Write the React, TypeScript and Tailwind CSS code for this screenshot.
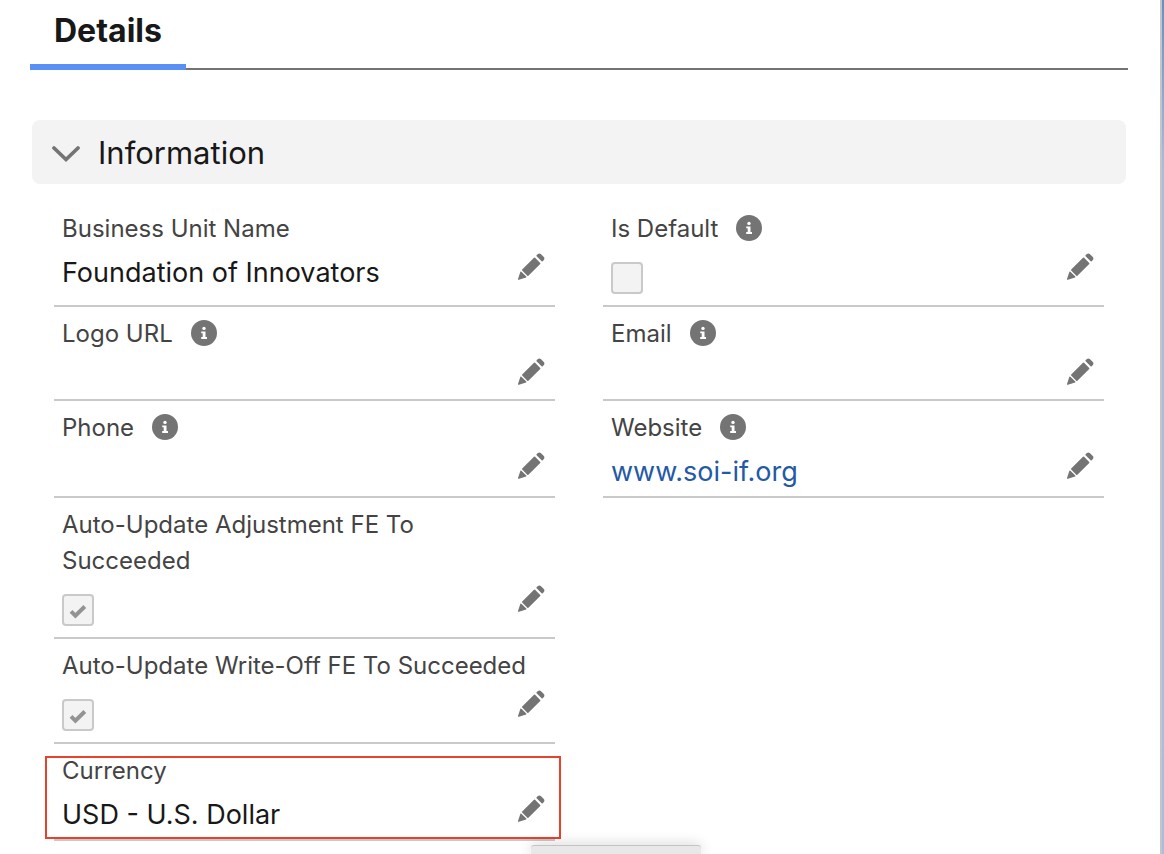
import React from 'react';

interface Field {
  id: string;
  label: string;
  info?: boolean;
  type?: 'text' | 'checkbox' | 'link';
  value?: string;
  checked?: boolean;
  highlighted?: boolean;
}

const rows: Field[][] = [
  [
    { id: 'name', label: 'Business Unit Name', value: 'Foundation of Innovators' },
    { id: 'default', label: 'Is Default', info: true, type: 'checkbox' },
  ],
  [
    { id: 'logo', label: 'Logo URL', info: true },
    { id: 'email', label: 'Email', info: true },
  ],
  [
    { id: 'phone', label: 'Phone', info: true },
    { id: 'website', label: 'Website', info: true, type: 'link', value: 'www.soi-if.org' },
  ],
  [{ id: 'adjustment', label: 'Auto-Update Adjustment FE To Succeeded', type: 'checkbox', checked: true }],
  [{ id: 'writeoff', label: 'Auto-Update Write-Off FE To Succeeded', type: 'checkbox', checked: true }],
  [{ id: 'currency', label: 'Currency', value: 'USD - U.S. Dollar', highlighted: true }],
];

const InfoIcon: React.FC = () => (
  <svg viewBox="0 0 26 26" className="w-[26px] h-[26px]" aria-hidden="true">
    <circle cx="13" cy="13" r="13" fill="#747474" />
    <circle cx="13" cy="8.4" r="1.7" fill="#fff" />
    <path d="M10.2 11.4h4.3v5.6h1.5v1.9h-5.8V17h1.5v-3.7h-1.5z" fill="#fff" />
  </svg>
);

const PencilIcon: React.FC = () => (
  <svg viewBox="0 0 28 28" className="w-7 h-7" fill="#747474" aria-hidden="true">
    <path d="M19.6 2.2 20.9 1q1.5-1.1 2.9.1l3 3q1.2 1.4.1 2.8l-1.2 1.3q-.6.5-1.1 0l-5-5q-.4-.5 0-1z" />
    <path d="M17 4.8q.5-.5 1.1 0l5.1 5.1q.5.5 0 1.1L11.4 22.7q-.5.5-1.1 0l-5.1-5.1q-.5-.5 0-1.1z" />
    <path d="M3.4 18.7q.4-.6 1 0l4.9 4.9q.5.5-.2.8l-7.2 2.4q-1.2.3-.9-.8z" />
  </svg>
);

const FieldCell: React.FC<{ field: Field }> = ({ field }) => (
  <div className="relative flex flex-col border-b-2 border-[#c9c9c9] px-2 pt-[9px] pb-[2px]">
    <div className="flex items-center gap-[18px] pr-2">
      <label htmlFor={field.id} className="text-[24px] leading-9 text-[#444444]">
        {field.label}
      </label>
      {field.info && (
        <button type="button" aria-label={`Help ${field.label}`} className="pb-[2px]">
          <InfoIcon />
        </button>
      )}
    </div>
    <div className="mt-1 flex min-h-[41px] items-start justify-between pr-[2px]">
      {field.type === 'checkbox' ? (
        <span className="relative mt-[11px] mb-[9px] block h-8 w-8">
          <input
            id={field.id}
            type="checkbox"
            defaultChecked={field.checked}
            disabled
            className="block h-8 w-8 appearance-none rounded-[4px] border-2 border-[#c9c9c9] bg-[#f3f3f3]"
          />
          {field.checked && (
            <svg viewBox="0 0 32 32" className="absolute inset-0 h-8 w-8" aria-hidden="true">
              <path d="M9 17.4l4.4 4.3 9.4-9.2" fill="none" stroke="#939393" strokeWidth="4" />
            </svg>
          )}
        </span>
      ) : field.type === 'link' ? (
        <a id={field.id} href="#website" className="text-[27px] leading-[44px] text-[#2459a6]">
          {field.value}
        </a>
      ) : (
        <output id={field.id} className="text-[27px] leading-[44px] text-[#181818]">
          {field.value}
        </output>
      )}
      <button type="button" aria-label={`Edit ${field.label}`} className="mt-[2px]">
        <PencilIcon />
      </button>
    </div>
    {field.highlighted && (
      <div className="pointer-events-none absolute -left-[9px] -right-[6px] top-3 bottom-0 border-2 border-[#e8432a]" />
    )}
  </div>
);

export default function App() {
  return (
    <div className="flex min-h-screen overflow-hidden bg-white font-['Inter','Liberation_Sans',sans-serif]">
      <main className="min-w-0 flex-1 border-r-2 border-[#c5c5c5] pl-[30px] pr-8">
        {/* Tabs */}
        <div role="tablist" className="flex h-[70px] items-end shadow-[inset_0_-2px_0_#747474]">
          <button
            type="button"
            role="tab"
            aria-selected="true"
            className="h-[70px] border-b-[6px] border-[#5890f5] px-6 pb-[2px] text-[32px] leading-[62px] font-bold text-[#181818]"
          >
            Details
          </button>
        </div>

        {/* Information section */}
        <section className="mx-[2px] mt-[50px]">
          <h3>
            <button
              type="button"
              aria-expanded="true"
              className="flex h-16 w-full items-center gap-[18px] rounded-lg bg-[#f3f3f3] px-5 pt-[2px] text-left text-[31px] text-[#181818]"
            >
              <svg viewBox="0 0 28 28" className="h-7 w-7" aria-hidden="true">
                <path d="M2 9l12 11.5 12-11.5" fill="none" stroke="#747474" strokeWidth="3.7" strokeLinecap="round" />
              </svg>
              Information
            </button>
          </h3>
          <div className="mt-[18px] px-[22px]">
            {rows.map((row) => (
              <div key={row[0].id} className="grid grid-cols-2 gap-x-12">
                {row.map((field) => (
                  <FieldCell key={field.id} field={field} />
                ))}
              </div>
            ))}
          </div>
        </section>
      </main>
      <div className="w-[2px] bg-linear-to-b from-[#6a8fbe] via-[#aebcdb] via-20% to-[#adbbdd]" />

      {/* Status bubble along the window's bottom edge */}
      <div className="fixed bottom-0 left-[531px] h-[9px] w-[170px] rounded-t-[3px] border-t border-[#c4c4c4] bg-[#e8e8e8] shadow-[0_0_14px_rgba(0,0,0,0.2)]" />
    </div>
  );
}
